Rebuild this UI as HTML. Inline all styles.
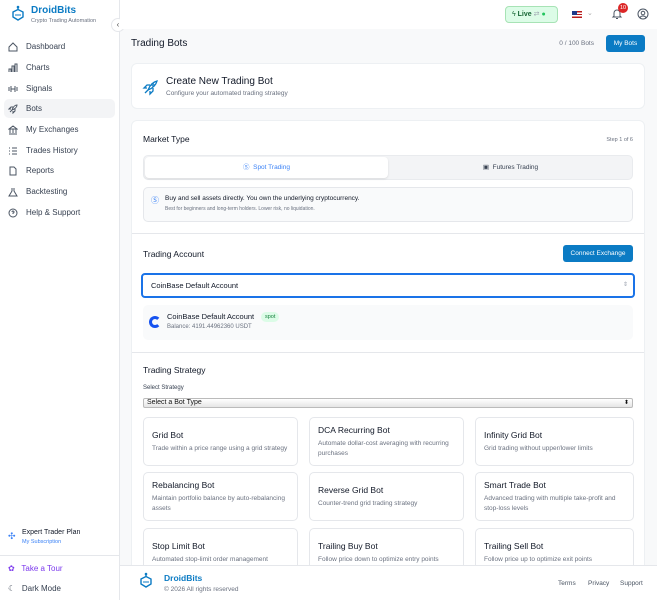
<!DOCTYPE html>
<html><head><meta charset="utf-8"><style>
*{box-sizing:border-box;margin:0;padding:0}
body{width:657px;height:600px;overflow:hidden;font-family:"Liberation Sans",sans-serif;background:#f8f9fa;position:relative;color:#1f2937}
.abs{position:absolute}
.side{left:0;top:0;width:120px;height:600px;background:#fff;border-right:1px solid #e5e7eb}
.nav{position:absolute;left:4px;width:111px;height:19px;font-size:8px;color:#374151;display:flex;align-items:center;padding-left:4px;border-radius:5px}
.nav svg{width:10px;height:10px;margin-right:8px;stroke:#4b5563;fill:none;stroke-width:1}
.card{background:#fff;border:1px solid #edf0f3;border-radius:6px}
.bot{position:absolute;width:155px;height:49px;background:#fff;border:1px solid #e5e7eb;border-radius:5px;padding:0 8px;display:flex;flex-direction:column;justify-content:center}
.bot b{font-size:8.5px;font-weight:normal;color:#111827;margin-bottom:4px}
.bot span{font-size:6.5px;color:#6b7280;line-height:9.5px}
</style></head><body>
<div class="abs side">
 <svg class="abs" style="left:10px;top:5px" width="16" height="18" viewBox="0 0 16 18"><circle cx="8" cy="2" r="1.3" fill="#0b7bc4"/><path d="M8 3v2M3 7l5-2.5 5 2.5v5l-5 3-5-3z" stroke="#0b7bc4" fill="none" stroke-width="1.4"/><path d="M5 10h6" stroke="#0b7bc4" stroke-width="1"/></svg>
 <div class="abs" style="left:31px;top:5px;font-size:10px;font-weight:bold;color:#0b7bc4">DroidBits</div>
 <div class="abs" style="left:31px;top:18px;font-size:5.5px;color:#6b7280">Crypto Trading Automation</div>
 <div class="abs" style="left:111px;top:18px;width:14px;height:14px;border-radius:50%;background:#fff;border:1px solid #e5e7eb;font-size:8px;color:#555;text-align:center;line-height:12px">‹</div>
 <div class="nav" style="top:37px"><svg viewBox="0 0 10 10"><path d="M1 5l4-4 4 4v4H1z"/></svg>Dashboard</div>
 <div class="nav" style="top:58px"><svg viewBox="0 0 10 10"><path d="M1 9V6h2v3M4 9V3h2v6M7 9V1h2v8"/></svg>Charts</div>
 <div class="nav" style="top:79px"><svg viewBox="0 0 10 10"><path d="M1 3v4M3 2v6M7 2v6M9 3v4M3 5h4"/></svg>Signals</div>
 <div class="nav" style="top:99px;background:#f3f4f6"><svg viewBox="0 0 10 10"><path d="M2 8l2-2M4 6c1-3 3-5 5-5 0 2-2 4-5 5zM3 5H1l2-2h2M5 7v2l2-2V5"/></svg>Bots</div>
 <div class="nav" style="top:120px"><svg viewBox="0 0 10 10"><path d="M1 4l4-3 4 3zM2 4v4M5 4v4M8 4v4M1 9h8"/></svg>My Exchanges</div>
 <div class="nav" style="top:141px"><svg viewBox="0 0 10 10"><path d="M1 2h1M1 5h1M1 8h1M4 2h5M4 5h5M4 8h5"/></svg>Trades History</div>
 <div class="nav" style="top:161px"><svg viewBox="0 0 10 10"><path d="M2 1h4l2 2v6H2z"/></svg>Reports</div>
 <div class="nav" style="top:182px"><svg viewBox="0 0 10 10"><path d="M4 1v3L1 9h8L6 4V1"/></svg>Backtesting</div>
 <div class="nav" style="top:203px"><svg viewBox="0 0 10 10"><circle cx="5" cy="5" r="4"/><path d="M4 4a1 1 0 1 1 1 1v1"/></svg>Help &amp; Support</div>
 <div class="abs" style="left:8px;top:531px;font-size:9px;color:#3b82f6">✣</div>
 <div class="abs" style="left:22px;top:529px;font-size:7px;color:#111827">Expert Trader Plan</div>
 <div class="abs" style="left:22px;top:539px;font-size:5.5px;color:#3b82f6">My Subscription</div>
 <div class="abs" style="left:0;top:555px;width:119px;border-top:1px solid #e5e7eb"></div>
 <div class="abs" style="left:8px;top:564px;font-size:8px;color:#7c3aed">✿&nbsp;&nbsp;&nbsp;Take a Tour</div>
 <div class="abs" style="left:8px;top:584px;font-size:8px;color:#374151">☾&nbsp;&nbsp;&nbsp;Dark Mode</div>
</div>
<div class="abs" style="left:120px;top:0;width:537px;height:29px;background:#fff"></div>
<div class="abs" style="left:505px;top:6px;width:53px;height:17px;border:1px solid #a7e3b5;background:#dcfce7;border-radius:4px;font-size:7px;color:#166534;line-height:15px;padding-left:6px">ϟ <b>Live</b> <span style="color:#9ca3af">⇄</span> <span style="color:#22c55e">●</span></div>
<div class="abs" style="left:572px;top:11px;width:10px;height:7px;background:linear-gradient(#b91c1c 0 20%,#fff 20% 40%,#b91c1c 40% 60%,#fff 60% 80%,#b91c1c 80%)"><div style="width:5px;height:4px;background:#1e3a8a"></div></div>
<div class="abs" style="left:587px;top:9px;font-size:7px;color:#aaa">⌄</div>
<svg class="abs" style="left:611px;top:8px" width="12" height="12" viewBox="0 0 12 12"><path d="M3 8V5a3 3 0 0 1 6 0v3l1 1H2zM5 10.5h2" stroke="#4b5563" fill="none" stroke-width="1"/></svg>
<div class="abs" style="left:618px;top:3px;width:10px;height:10px;border-radius:50%;background:#dc2626;color:#fff;font-size:5.5px;text-align:center;line-height:10px">10</div>
<svg class="abs" style="left:637px;top:8px" width="12" height="12" viewBox="0 0 12 12"><circle cx="6" cy="6" r="5" stroke="#4b5563" fill="none"/><circle cx="6" cy="5" r="1.8" stroke="#4b5563" fill="none"/><path d="M3 9.5a3.5 3 0 0 1 6 0" stroke="#4b5563" fill="none"/></svg>
<div class="abs" style="left:131px;top:38px;font-size:10px;color:#111827">Trading Bots</div>
<div class="abs" style="left:540px;width:54px;text-align:right;top:40px;font-size:6.5px;color:#6b7280">0 / 100 Bots</div>
<div class="abs" style="left:606px;top:35px;width:39px;height:17px;background:#0b7bc4;border-radius:3px;color:#fff;font-size:6.5px;text-align:center;line-height:17px">My Bots</div>
<div class="abs card" style="left:131px;top:63px;width:514px;height:46px"></div>
<svg class="abs" style="left:142px;top:80px" width="16" height="16" viewBox="0 0 16 16"><path d="M3 13l3-3M6 10c2-5 5-8 9-9-1 4-4 7-9 9zM5 8H2l3-3h3M8 11v3l3-3V8" stroke="#0b7bc4" fill="none" stroke-width="1.3"/><circle cx="11" cy="5" r="1" stroke="#0b7bc4" fill="none"/></svg>
<div class="abs" style="left:166px;top:76px;font-size:10px;color:#111827">Create New Trading Bot</div>
<div class="abs" style="left:166px;top:90px;font-size:6.5px;color:#6b7280">Configure your automated trading strategy</div>
<div class="abs card" style="left:131px;top:120px;width:514px;height:460px"></div>
<div class="abs" style="left:143px;top:134px;font-size:8.5px;color:#111827">Market Type</div>
<div class="abs" style="left:573px;width:60px;text-align:right;top:137px;font-size:5.5px;color:#6b7280">Step 1 of 6</div>
<div class="abs" style="left:143px;top:155px;width:490px;height:25px;background:#f3f4f6;border-radius:5px;border:1px solid #e9ebee"></div>
<div class="abs" style="left:145px;top:157px;width:243px;height:21px;background:#fff;border-radius:4px;box-shadow:0 1px 2px rgba(0,0,0,.1);font-size:6.5px;color:#3b82f6;text-align:center;line-height:21px">Ⓢ&nbsp; Spot Trading</div>
<div class="abs" style="left:390px;top:157px;width:241px;height:21px;font-size:6.5px;color:#374151;text-align:center;line-height:21px">▣&nbsp; Futures Trading</div>
<div class="abs" style="left:143px;top:187px;width:490px;height:35px;background:#f9fafb;border:1px solid #e5e7eb;border-radius:5px"></div>
<div class="abs" style="left:151px;top:195px;font-size:8px;color:#3b82f6">Ⓢ</div>
<div class="abs" style="left:165px;top:195px;font-size:6.5px;color:#111827">Buy and sell assets directly. You own the underlying cryptocurrency.</div>
<div class="abs" style="left:165px;top:206px;font-size:5px;color:#6b7280">Best for beginners and long-term holders. Lower risk, no liquidation.</div>
<div class="abs" style="left:132px;top:233px;width:512px;border-top:1px solid #e5e7eb"></div>
<div class="abs" style="left:143px;top:249px;font-size:8.5px;color:#111827">Trading Account</div>
<div class="abs" style="left:563px;top:245px;width:70px;height:17px;background:#0b7bc4;border-radius:3px;color:#fff;font-size:6.5px;text-align:center;line-height:17px">Connect Exchange</div>
<div class="abs" style="left:141px;top:273px;width:494px;height:25px;border:2px solid #1a73e8;border-radius:4px;background:#fff;font-size:7.5px;color:#111827;line-height:21px;padding-left:8px">CoinBase Default Account<span style="position:absolute;right:5px;color:#9ca3af;font-size:6px">⇕</span></div>
<div class="abs" style="left:143px;top:305px;width:490px;height:35px;background:#f9fafb;border-radius:5px"></div>
<div class="abs" style="left:149px;top:316px;width:12px;height:12px;border-radius:50%;border:3px solid #1652f0;border-right-color:transparent"></div>
<div class="abs" style="left:167px;top:312px;font-size:7.5px;color:#111827">CoinBase Default Account</div>
<div class="abs" style="left:261px;top:312px;height:10px;padding:0 4px;background:#dcfce7;border-radius:5px;font-size:5.5px;color:#15803d;line-height:10px">spot</div>
<div class="abs" style="left:167px;top:324px;font-size:6px;color:#6b7280">Balance: 4191.44962360 USDT</div>
<div class="abs" style="left:132px;top:352px;width:512px;border-top:1px solid #e5e7eb"></div>
<div class="abs" style="left:143px;top:365px;font-size:8.5px;color:#111827">Trading Strategy</div>
<div class="abs" style="left:143px;top:385px;font-size:6px;color:#374151">Select Strategy</div>
<div class="abs" style="left:143px;top:398px;width:490px;height:10px;background:linear-gradient(#fff,#e5e5e5);border:1px solid #bbb;border-radius:2px;font-size:7px;color:#111;line-height:8px;padding-left:3px">Select a Bot Type<span style="position:absolute;right:3px;font-size:6px">⬍</span></div>
<div class="bot" style="left:143px;top:417px"><b>Grid Bot</b><span>Trade within a price range using a grid strategy</span></div>
<div class="bot" style="left:309px;top:417px"><b>DCA Recurring Bot</b><span>Automate dollar-cost averaging with recurring purchases</span></div>
<div class="bot" style="left:475px;top:417px;width:159px"><b>Infinity Grid Bot</b><span>Grid trading without upper/lower limits</span></div>
<div class="bot" style="left:143px;top:472px"><b>Rebalancing Bot</b><span>Maintain portfolio balance by auto-rebalancing assets</span></div>
<div class="bot" style="left:309px;top:472px"><b>Reverse Grid Bot</b><span>Counter-trend grid trading strategy</span></div>
<div class="bot" style="left:475px;top:472px;width:159px"><b>Smart Trade Bot</b><span>Advanced trading with multiple take-profit and stop-loss levels</span></div>
<div class="bot" style="left:143px;top:528px"><b>Stop Limit Bot</b><span>Automated stop-limit order management</span></div>
<div class="bot" style="left:309px;top:528px"><b>Trailing Buy Bot</b><span>Follow price down to optimize entry points</span></div>
<div class="bot" style="left:475px;top:528px;width:159px"><b>Trailing Sell Bot</b><span>Follow price up to optimize exit points</span></div>
<div class="abs" style="left:120px;top:565px;width:537px;height:35px;background:#fff;border-top:1px solid #e5e7eb"></div>
<svg class="abs" style="left:138px;top:572px" width="16" height="18" viewBox="0 0 16 18"><circle cx="8" cy="2" r="1.3" fill="#0b7bc4"/><path d="M8 3v2M3 7l5-2.5 5 2.5v5l-5 3-5-3z" stroke="#0b7bc4" fill="none" stroke-width="1.4"/><path d="M5 10h6" stroke="#0b7bc4" stroke-width="1"/></svg>
<div class="abs" style="left:164px;top:573px;font-size:8.5px;font-weight:bold;color:#0b7bc4">DroidBits</div>
<div class="abs" style="left:164px;top:586px;font-size:6.5px;color:#6b7280">© 2026 All rights reserved</div>
<div class="abs" style="left:558px;top:580px;font-size:6.5px;color:#4b5563">Terms</div>
<div class="abs" style="left:588px;top:580px;font-size:6.5px;color:#4b5563">Privacy</div>
<div class="abs" style="left:620px;top:580px;font-size:6.5px;color:#4b5563">Support</div>
</body></html>
